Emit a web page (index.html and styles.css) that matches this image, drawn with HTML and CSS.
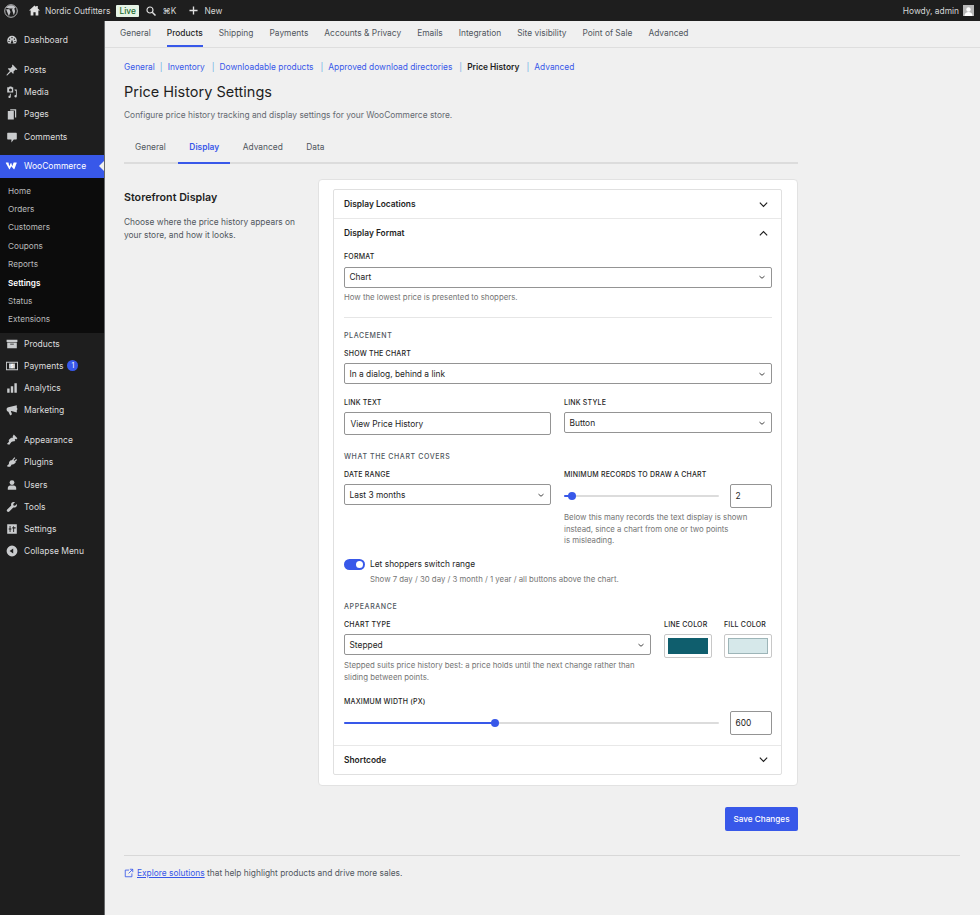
FILE: index.html
```html
<!DOCTYPE html>
<html>
<head>
    <meta charset="UTF-8">
    <meta name="viewport" content="width=device-width, initial-scale=1.0">
    <title>Price History Settings</title>
    <link rel="stylesheet" href="styles.css">
</head>
<body>
    <header class="adminbar">
        <svg class="bar-logo" viewBox="0 0 20 20"><circle cx="10" cy="10" r="9" fill="none" stroke="#c3c4c7" stroke-width="1.3"/><path d="M3 7.500l4 10 2.300-6-1.500-4h-1V6.500h5.500v1h-1.200l3 8.500 1.500-4.500c.6-2-.5-3.200-.8-4.200-.2-1 .5-2 1.500-2.100C15.800 3.300 13.100 1.800 10 1.800 7 1.800 4.400 3.400 3 5.700h3.500v1.800z" fill="#c3c4c7"/></svg>
        <svg class="bar-home" viewBox="0 0 20 20"><path d="M10 1L0 10h3v9h5v-6h4v6h5v-9h3L16 6.500V2h-3v1.800z" fill="#e0e0e0"/></svg>
        <span class="bar-site">Nordic Outfitters</span>
        <span class="bar-live">Live</span>
        <svg class="bar-search" viewBox="0 0 20 20"><circle cx="8" cy="8" r="6" fill="none" stroke="#e0e0e0" stroke-width="2.400"/><path d="M12.500 12.500L19 19" stroke="#e0e0e0" stroke-width="3"/></svg>
        <span class="bar-key">⌘K</span>
        <svg class="bar-plus" viewBox="0 0 20 20"><path d="M8.500 1h3v7.500H19v3h-7.500V19h-3v-7.500H1v-3h7.500z" fill="#e0e0e0"/></svg>
        <span class="bar-new">New</span>
        <span class="bar-howdy">Howdy, admin</span>
        <span class="bar-avatar"><svg viewBox="0 0 11 11"><circle cx="5.500" cy="4.500" r="2.200" fill="#fff"/><path d="M1.500 11c0-3 2-4 4-4s4 1 4 4z" fill="#fff"/></svg></span>
    </header>

    <div class="wrap">
        <nav class="sidebar">
            <a class="menu-item group-end"><svg viewBox="0 0 20 20"><path d="M10 3a8 8 0 0 0-8 8c0 2 .7 3.700 2 5h12c1.300-1.300 2-3 2-5a8 8 0 0 0-8-8zM9 5h2v2H9zM5 7.500h2v2H5zm8 0h2v2h-2zM4 11.500h2v2H4zm10 0h2v2h-2zM10 9l1.500 4a2 2 0 1 1-2.800 0z" fill="#c9cbcd" fill-rule="evenodd"/></svg><span>Dashboard</span></a>
            <a class="menu-item"><svg viewBox="0 0 20 20"><path d="M11 1l8 8-2 1-1-1-3.500 3.500c.5 1.500.3 3-.5 4l-3.500-3.500L2 19l-1 0 0-1 5.500-6.500L3 8c1-.8 2.500-1 4-.5L10.500 4 10 3z" fill="#c9cbcd"/></svg><span>Posts</span></a>
            <a class="menu-item"><svg viewBox="0 0 20 20"><path d="M2 2h3l1-1h3l1 1h2v9H2zm5.500 2a2.500 2.500 0 1 0 0 5 2.500 2.500 0 0 0 0-5zM14 6h4v11a2 2 0 1 1-1.500-1.900V8H15zM8 13v5a2 2 0 1 1-1.500-1.900V13z" fill="#c9cbcd" fill-rule="evenodd"/></svg><span>Media</span></a>
            <a class="menu-item"><svg viewBox="0 0 20 20"><path d="M7 2h10v14h-2V4H7zM3 5h10v14H3z" fill="#c9cbcd"/></svg><span>Pages</span></a>
            <a class="menu-item group-end"><svg viewBox="0 0 20 20"><path d="M3 3h14a1 1 0 0 1 1 1v9a1 1 0 0 1-1 1h-4l-4 5v-5H3a1 1 0 0 1-1-1V4a1 1 0 0 1 1-1z" fill="#c9cbcd"/></svg><span>Comments</span></a>

            <a class="menu-item menu-current"><svg viewBox="0 0 20 20"><path d="M.5 5c-.3-.6 0-1 .6-1h3.300c.4 0 .6.200.7.600l1.100 6 2.400-5.300c.3-.6.900-.6 1.200 0l1.400 5.300 2.200-6c.2-.4.400-.6.900-.6h3.800c.6 0 .9.500.600 1l-3.800 9.800c-.3.600-.9.700-1.300.1L9.700 10.500l-2.400 4.400c-.3.600-1 .500-1.300-.1z" fill="#fff"/></svg><span>WooCommerce</span></a>
            <div class="submenu">
                <a>Home</a>
                <a>Orders</a>
                <a>Customers</a>
                <a>Coupons</a>
                <a>Reports</a>
                <a class="sub-current">Settings</a>
                <a>Status</a>
                <a>Extensions</a>
            </div>

            <a class="menu-item"><svg viewBox="0 0 20 20"><path d="M1 3h18v3.500H1zM2 7.500h16V17H2zm5 2v1.500h6V9.500z" fill="#c9cbcd" fill-rule="evenodd"/></svg><span>Products</span></a>
            <a class="menu-item"><svg viewBox="0 0 20 20"><path d="M0 3h20v14H0zm1.500 1.500v11h17v-11zM5 6h10v8H5z" fill="#c9cbcd" fill-rule="evenodd"/><text x="10" y="13" class="dollar">$</text></svg><span>Payments</span><b class="badge">1</b></a>
            <a class="menu-item"><svg viewBox="0 0 20 20"><path d="M2 11h4v7H2zM8 7h4v11H8zM14 2h4v16h-4z" fill="#c9cbcd"/></svg><span>Analytics</span></a>
            <a class="menu-item group-end"><svg viewBox="0 0 20 20"><path d="M18 2v12l-9-2.500-1 .3L10 17l-3 2-3-6.200C2.300 12.500 1 11 1 9c0-1.800 1.200-3 3-3.500zM15 6.500a2.500 2.500 0 1 1 0 4" fill="#c9cbcd"/></svg><span>Marketing</span></a>

            <a class="menu-item"><svg viewBox="0 0 20 20"><path d="M13 1l6 6-2 2-1-1-1.500 1.500 1 1-2 2-1.500-.5-3 1.500-3.500 4.500-4-1.500L5 13l-.5-3L9 6l1 1 1.500-1.500-.5-1z" fill="#c9cbcd"/></svg><span>Appearance</span></a>
            <a class="menu-item"><svg viewBox="0 0 20 20"><path d="M14 2l1.500 1.500-3 3L14 8l3-3 1.500 1.500-3 3 1 1-2 2c-1.500 1.500-3.500 2-5 1.500L7 18H2.500l-.5-2 3-2.500c-.5-1.500 0-3.500 1.500-5l2-2 1 1z" fill="#c9cbcd"/></svg><span>Plugins</span></a>
            <a class="menu-item"><svg viewBox="0 0 20 20"><circle cx="10" cy="6" r="4" fill="#c9cbcd"/><path d="M3 18v-3c0-2.500 2-4 4-4h6c2 0 4 1.500 4 4v3z" fill="#c9cbcd"/></svg><span>Users</span></a>
            <a class="menu-item"><svg viewBox="0 0 20 20"><path d="M18 5l-3 3-2.500-.5L12 5l3-3c-2-1-4.500-.5-5.500 1-1 1-1.300 2.800-.8 4.300L2 14c-1 1-1 2.500 0 3.500s2.500 1 3.500 0l6.700-6.700c1.500.5 3.300.2 4.300-.8 1.500-1.200 2.300-3 1.500-5z" fill="#c9cbcd"/></svg><span>Tools</span></a>
            <a class="menu-item"><svg viewBox="0 0 20 20"><path d="M2 2h16v16H2zm4 3v4H4.500v2H6v4h1.500v-4H9V9H7.500V5zm6 0v2h-1.500l2.500 0V5zm0 4v6h1.500V9H16V7h-5.500v2z" fill="#c9cbcd" fill-rule="evenodd"/></svg><span>Settings</span></a>
            <a class="menu-item"><svg viewBox="0 0 20 20"><path d="M10 1a9 9 0 1 0 0 18 9 9 0 0 0 0-18zm2 5v8L6 10z" fill="#c9cbcd" fill-rule="evenodd"/></svg><span>Collapse Menu</span></a>
        </nav>

        <main class="content">
            <div class="top-tabs">
                <a>General</a>
                <a class="active">Products</a>
                <a>Shipping</a>
                <a>Payments</a>
                <a>Accounts &amp; Privacy</a>
                <a>Emails</a>
                <a>Integration</a>
                <a>Site visibility</a>
                <a>Point of Sale</a>
                <a>Advanced</a>
            </div>

            <div class="page">
                <div class="subnav">
                    <a>General</a><i>|</i>
                    <a>Inventory</a><i>|</i>
                    <a>Downloadable products</a><i>|</i>
                    <a>Approved download directories</a><i>|</i>
                    <strong>Price History</strong><i>|</i>
                    <a>Advanced</a>
                </div>
                <h1>Price History Settings</h1>
                <p class="page-desc">Configure price history tracking and display settings for your WooCommerce store.</p>

                <div class="inner-tabs">
                    <a>General</a>
                    <a class="active">Display</a>
                    <a>Advanced</a>
                    <a>Data</a>
                </div>

                <section class="settings">
                    <div class="settings-intro">
                        <h2>Storefront Display</h2>
                        <p>Choose where the price history appears on your store, and how it looks.</p>
                    </div>

                    <div class="card">
                        <div class="accordion">
                            <div class="acc-head">
                                <span>Display Locations</span>
                                <svg class="chev" viewBox="0 0 12 12"><path d="M2 4l4 4 4-4"/></svg>
                            </div>

                            <div class="acc-open">
                                <div class="acc-head acc-head-open">
                                    <span>Display Format</span>
                                    <svg class="chev" viewBox="0 0 12 12"><path d="M2 8l4-4 4 4"/></svg>
                                </div>

                                <label class="field-label">FORMAT</label>
                                <div class="select">Chart<svg viewBox="0 0 12 12"><path d="M3 5l3 2.500L9 5"/></svg></div>
                                <p class="help help-format">How the lowest price is presented to shoppers.</p>

                                <hr class="divider">

                                <div class="group-title">PLACEMENT</div>
                                <label class="field-label">SHOW THE CHART</label>
                                <div class="select">In a dialog, behind a link<svg viewBox="0 0 12 12"><path d="M3 5l3 2.500L9 5"/></svg></div>

                                <div class="two-col link-row">
                                    <div>
                                        <label class="field-label">LINK TEXT</label>
                                        <div class="text-input">View Price History</div>
                                    </div>
                                    <div>
                                        <label class="field-label">LINK STYLE</label>
                                        <div class="select">Button<svg viewBox="0 0 12 12"><path d="M3 5l3 2.500L9 5"/></svg></div>
                                    </div>
                                </div>

                                <div class="group-title covers-title">WHAT THE CHART COVERS</div>
                                <div class="two-col">
                                    <div>
                                        <label class="field-label">DATE RANGE</label>
                                        <div class="select">Last 3 months<svg viewBox="0 0 12 12"><path d="M3 5l3 2.500L9 5"/></svg></div>
                                    </div>
                                    <div>
                                        <label class="field-label">MINIMUM RECORDS TO DRAW A CHART</label>
                                        <div class="slider-row">
                                            <div class="slider"><div class="slider-fill" style="width: 8px"></div></div>
                                            <div class="number-input">2</div>
                                        </div>
                                        <p class="help help-records">Below this many records the text display is shown instead, since a chart from one or two points is&nbsp;misleading.</p>
                                    </div>
                                </div>

                                <div class="toggle-row">
                                    <span class="toggle"></span>
                                    <div>
                                        <div class="toggle-label">Let shoppers switch range</div>
                                        <p class="help">Show 7 day / 30 day / 3 month / 1 year / all buttons above the chart.</p>
                                    </div>
                                </div>

                                <div class="group-title">APPEARANCE</div>
                                <div class="appearance-row">
                                    <div class="chart-type">
                                        <label class="field-label">CHART TYPE</label>
                                        <div class="select">Stepped<svg viewBox="0 0 12 12"><path d="M3 5l3 2.500L9 5"/></svg></div>
                                        <p class="help help-type">Stepped suits price history best: a price holds until the next change rather than sliding between points.</p>
                                    </div>
                                    <div>
                                        <label class="field-label">LINE COLOR</label>
                                        <div class="swatch"><span class="swatch-line"></span></div>
                                    </div>
                                    <div>
                                        <label class="field-label">FILL COLOR</label>
                                        <div class="swatch"><span class="swatch-fill"></span></div>
                                    </div>
                                </div>

                                <label class="field-label max-label">MAXIMUM WIDTH (PX)</label>
                                <div class="slider-row">
                                    <div class="slider"><div class="slider-fill" style="width: 151px"></div></div>
                                    <div class="number-input">600</div>
                                </div>
                            </div>

                            <div class="acc-head">
                                <span>Shortcode</span>
                                <svg class="chev" viewBox="0 0 12 12"><path d="M2 4l4 4 4-4"/></svg>
                            </div>
                        </div>
                    </div>
                </section>

                <div class="save-row"><button class="save-btn" type="button">Save Changes</button></div>
            </div>

            <footer class="foot">
                <svg viewBox="0 0 12 12"><path d="M6 2.500H1.500v8h8V6.500M7 1.500h3.500V5M10.500 1.500L5.500 6.500"/></svg>
                <a>Explore solutions</a>&nbsp;that help highlight products and drive more sales.
            </footer>
        </main>
    </div>
</body>
</html>
```

FILE: styles.css
```css
* {
    box-sizing: border-box;
}

body {
    margin: 0;
    background-color: #f0f0f0;
    font-family: Inter, "Liberation Sans", sans-serif;
    font-size: 8.400px;
    color: #1e1e1e;
}

/* admin bar */
.adminbar {
    display: flex;
    align-items: center;
    height: 21px;
    background-color: #1e1e1e;
    color: #d5d6d7;
    white-space: nowrap;
}

.bar-logo { width: 14px; height: 14px; margin-left: 4px; }
.bar-home { width: 11px; height: 11px; margin-left: 11px; }
.bar-site { margin-left: 5px; width: 65px; }

.bar-live {
    margin-left: 6px;
    padding: 0 3.500px;
    line-height: 12px;
    background-color: #e6f4e6;
    border-radius: 1px;
    color: #1a6b2e;
    font-weight: 500;
}

.bar-search { width: 10px; height: 10px; margin-left: 7px; }
.bar-key { margin-left: 6px; }
.bar-plus { width: 9px; height: 9px; margin-left: 13px; }
.bar-new { margin-left: 6px; }
.bar-howdy { margin-left: auto; }

.bar-avatar {
    width: 11px;
    height: 11px;
    margin: 0 6px 0 4px;
    background-color: #b8b8b8;
}

.bar-avatar svg { display: block; }

/* sidebar */
.wrap {
    display: flex;
    min-height: 894px;
}

.sidebar {
    flex: 0 0 105px;
    padding-top: 8px;
    background-color: #1e1e1e;
    border-right: 1px solid #66686a;
    color: #dcdcdd;
}

.menu-item {
    display: flex;
    align-items: center;
    height: 22.250px;
    font-size: 8.500px;
}

.menu-item svg {
    flex: none;
    width: 12px;
    height: 12px;
    margin: 0 6px;
}

.menu-item .dollar {
    fill: #fff;
    font-size: 8px;
    font-weight: 700;
    text-anchor: middle;
}

.group-end {
    margin-bottom: 7.500px;
}

.menu-current {
    position: relative;
    background-color: #3858e9;
    color: #fff;
}

.menu-current svg {
    width: 13px;
    margin: 0 6px 0 5px;
}

.menu-current::after {
    content: "";
    position: absolute;
    right: 0;
    top: 6px;
    border: 5px solid transparent;
    border-right-color: #f0f0f0;
}

.submenu {
    height: 155px;
    padding: 4px 0;
    background-color: #0c0c0c;
    color: #b9babb;
    font-size: 8.200px;
}

.submenu a {
    display: block;
    padding-left: 8px;
    line-height: 18.400px;
}

.submenu .sub-current {
    color: #fff;
    font-weight: 600;
}

.badge {
    display: inline-block;
    width: 11px;
    height: 11px;
    margin-left: 4px;
    background-color: #3858e9;
    border-radius: 50%;
    color: #fff;
    font-size: 7px;
    font-weight: 400;
    line-height: 11px;
    text-align: center;
}

/* main area */
.content {
    flex: 1;
    min-width: 0;
}

.top-tabs {
    display: flex;
    gap: 16px;
    height: 27px;
    padding-left: 15px;
    border-bottom: 1px solid #dedede;
    color: #50575e;
}

.top-tabs a {
    height: 26px;
    line-height: 25px;
    white-space: nowrap;
}

.top-tabs .active {
    border-bottom: 2px solid #3858e9;
    color: #1e1e1e;
    font-weight: 500;
}

.page {
    width: 674px;
    margin-left: 19px;
}

.subnav {
    display: flex;
    margin-top: 13px;
    line-height: 12px;
    color: #3858e9;
    white-space: nowrap;
}

.subnav i {
    margin: 0 5px 0 7px;
    color: #72aee6;
    font-style: normal;
}

.subnav i:first-of-type {
    margin-left: 5px;
}

.subnav strong {
    color: #1e1e1e;
    font-weight: 600;
}

h1 {
    margin: 6.500px 0 0;
    font-size: 14.500px;
    font-weight: 400;
    line-height: 24px;
    color: #1e1e1e;
}

.page-desc {
    margin: 5.500px 0 0;
    line-height: 12px;
    color: #646970;
}

.inner-tabs {
    display: flex;
    gap: 1.500px;
    margin-top: 13px;
    height: 30px;
    border-bottom: 2px solid #dcdcdc;
    color: #50575e;
}

.inner-tabs a {
    height: 30px;
    padding: 0 11px;
    line-height: 27px;
    white-space: nowrap;
}

.inner-tabs .active {
    border-bottom: 2px solid #3858e9;
    color: #3858e9;
    font-weight: 600;
}

.settings {
    display: flex;
    margin-top: 15px;
}

.settings-intro {
    flex: 0 0 194px;
    padding-top: 12px;
}

.settings-intro h2 {
    margin: 0;
    font-size: 10.700px;
    font-weight: 600;
    line-height: 14px;
}

.settings-intro p {
    margin: 11px 0 0;
    width: 175px;
    line-height: 12.500px;
    color: #50575e;
}

.card {
    width: 480px;
    padding: 9px 15px 10px 14px;
    background-color: #fff;
    border: 1px solid #e2e2e2;
    border-radius: 4px;
}

.accordion {
    border: 1px solid #e0e0e0;
    border-radius: 2px;
}

.acc-head {
    display: flex;
    align-items: center;
    justify-content: space-between;
    height: 28px;
    padding: 0 12px 0 10px;
    font-weight: 600;
}

.acc-open {
    padding: 0 9px 10px 10px;
    border-top: 1px solid #e8e8e8;
    border-bottom: 1px solid #e8e8e8;
}

.acc-head-open {
    margin-bottom: 5px;
    padding: 0 3px 0 0;
}

.chev {
    width: 11px;
    height: 11px;
    fill: none;
    stroke: #1e1e1e;
    stroke-width: 1.300;
}

.field-label {
    display: block;
    font-size: 7px;
    font-weight: 500;
    line-height: 10px;
    letter-spacing: .2px;
    color: #1e1e1e;
    white-space: nowrap;
}

.group-title {
    font-size: 7px;
    font-weight: 500;
    line-height: 10px;
    letter-spacing: .6px;
    color: #50575e;
    margin-bottom: 8px;
}

.select,
.text-input,
.number-input {
    display: flex;
    align-items: center;
    justify-content: space-between;
    margin-top: 4.500px;
    padding: 0 4.500px;
    background-color: #fff;
    border: 1px solid #949494;
    border-radius: 2px;
    color: #1e1e1e;
}

.select {
    height: 21px;
}

.select svg {
    width: 10px;
    height: 10px;
    fill: none;
    stroke: #1e1e1e;
    stroke-width: 1;
}

.text-input {
    height: 23px;
    padding: 0 5.500px;
}

.help {
    margin: 0;
    font-size: 7.800px;
    line-height: 11.800px;
    color: #757575;
}

.help-format {
    margin-top: 4.500px;
}

.divider {
    margin: 13px 0 13px;
    border: 0;
    border-top: 1px solid #e6e6e6;
}

.two-col {
    display: grid;
    grid-template-columns: 207px 208px;
    gap: 13px;
}

.link-row {
    margin-top: 13.500px;
}

.covers-title {
    margin-top: 16.500px;
}

.slider-row {
    display: flex;
    align-items: center;
    gap: 11px;
    margin-top: 4px;
}

.slider {
    position: relative;
    flex: 1;
    height: 2px;
    background-color: #dcdcdc;
    border-radius: 1px;
}

.slider-fill {
    position: relative;
    height: 2px;
    background-color: #3858e9;
    border-radius: 1px;
}

.slider-fill::after {
    content: "";
    position: absolute;
    right: -4px;
    top: -3px;
    width: 8px;
    height: 8px;
    background-color: #3858e9;
    border-radius: 50%;
}

.number-input {
    flex: 0 0 42px;
    height: 24px;
    margin-top: 0;
}

.help-records {
    width: 190px;
    margin-top: 4px;
}

.toggle-row {
    display: flex;
    gap: 5px;
    margin-top: 11.500px;
    margin-bottom: 16px;
}

.toggle {
    position: relative;
    flex: 0 0 21px;
    height: 11px;
    background-color: #3858e9;
    border-radius: 6px;
}

.toggle::after {
    content: "";
    position: absolute;
    right: 2px;
    top: 2px;
    width: 7px;
    height: 7px;
    background-color: #fff;
    border-radius: 50%;
}

.toggle-label {
    line-height: 11px;
    margin-bottom: 4.500px;
}

.appearance-row {
    display: flex;
    gap: 12px;
}

.chart-type {
    width: 307px;
    margin-right: 1px;
}

.help-type {
    margin-top: 4.500px;
}

.swatch {
    width: 48px;
    height: 24px;
    margin-top: 4.500px;
    padding: 3px;
    background-color: #fff;
    border: 1px solid #c8c8c8;
    border-radius: 2px;
}

.swatch span {
    display: block;
    height: 100%;
}

.swatch-line {
    background-color: #0f5e6d;
}

.swatch-fill {
    background-color: #d6e8ea;
    border: 1px solid #9db5b8;
}

.max-label {
    margin-top: 13px;
}

.save-row {
    display: flex;
    justify-content: flex-end;
    margin-top: 21px;
}

.save-btn {
    width: 73px;
    height: 24px;
    padding: 0;
    background-color: #3858e9;
    border: 0;
    border-radius: 2px;
    color: #fff;
    font: 500 8.200px Inter, "Liberation Sans", sans-serif;
}

.foot {
    display: flex;
    align-items: center;
    margin: 24px 20px 0 19px;
    padding-top: 11.500px;
    border-top: 1px solid #d8d8d8;
    line-height: 12px;
    color: #50575e;
}

.foot svg {
    width: 10px;
    height: 10px;
    margin-right: 3px;
    fill: none;
    stroke: #3858e9;
    stroke-width: 1;
}

.foot a {
    color: #3858e9;
    text-decoration: underline;
}
```
